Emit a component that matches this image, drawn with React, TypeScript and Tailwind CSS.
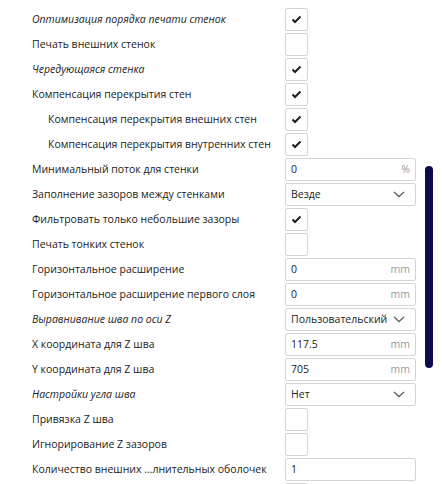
type Row =
  | { label: string; italic?: boolean; indent?: boolean; kind: "check"; checked: boolean }
  | { label: string; italic?: boolean; indent?: boolean; kind: "input"; value: string; unit?: string }
  | { label: string; italic?: boolean; indent?: boolean; kind: "select"; value: string };

const rows: Row[] = [
  { label: "Оптимизация порядка печати стенок", italic: true, kind: "check", checked: true },
  { label: "Печать внешних стенок", kind: "check", checked: false },
  { label: "Чередующаяся стенка", italic: true, kind: "check", checked: true },
  { label: "Компенсация перекрытия стен", kind: "check", checked: true },
  { label: "Компенсация перекрытия внешних стен", indent: true, kind: "check", checked: true },
  { label: "Компенсация перекрытия внутренних стен", indent: true, kind: "check", checked: true },
  { label: "Минимальный поток для стенки", kind: "input", value: "0", unit: "%" },
  { label: "Заполнение зазоров между стенками", kind: "select", value: "Везде" },
  { label: "Фильтровать только небольшие зазоры", kind: "check", checked: true },
  { label: "Печать тонких стенок", kind: "check", checked: false },
  { label: "Горизонтальное расширение", kind: "input", value: "0", unit: "mm" },
  { label: "Горизонтальное расширение первого слоя", kind: "input", value: "0", unit: "mm" },
  { label: "Выравнивание шва по оси Z", italic: true, kind: "select", value: "Пользовательский" },
  { label: "X координата для Z шва", kind: "input", value: "117.5", unit: "mm" },
  { label: "Y координата для Z шва", kind: "input", value: "705", unit: "mm" },
  { label: "Настройки угла шва", italic: true, kind: "select", value: "Нет" },
  { label: "Привязка Z шва", kind: "check", checked: false },
  { label: "Игнорирование Z зазоров", kind: "check", checked: false },
  { label: "Количество внешних ...лнительных оболочек", kind: "input", value: "1" },
  { label: "", kind: "check", checked: false },
];

function Check() {
  return (
    <svg width="11" height="9" viewBox="0 0 11 9" fill="none">
      <path d="M1.5 4.5 L4 7 L9.5 1.5" stroke="#1f1f1f" strokeWidth="2" />
    </svg>
  );
}

function Chevron() {
  return (
    <svg width="12" height="7" viewBox="0 0 12 7" fill="none">
      <path d="M1 1 L6 5.5 L11 1" stroke="#666" strokeWidth="1.4" />
    </svg>
  );
}

function Control({ row }: { row: Row }) {
  if (row.kind === "check") {
    return (
      <div className="flex h-[23px] w-[23px] items-center justify-center rounded-[2px] border border-[#d4d4d4] bg-white">
        {row.checked && <Check />}
      </div>
    );
  }
  if (row.kind === "select") {
    return (
      <div className="flex h-[23px] w-[131px] items-center justify-between rounded-[2px] border border-[#d4d4d4] bg-white pl-[5px] pr-[10px]">
        <span>{row.value}</span>
        <Chevron />
      </div>
    );
  }
  return (
    <div className="flex h-[23px] w-[131px] items-center justify-between rounded-[2px] border border-[#d4d4d4] bg-white pl-[5px] pr-[5px]">
      <span>{row.value}</span>
      {row.unit && <span className="text-[#9a9a9a]">{row.unit}</span>}
    </div>
  );
}

export default function App() {
  return (
    <div
      className="relative h-[484px] w-[442px] overflow-hidden bg-white pt-[8px] text-[10.5px] text-[#222]"
      style={{ fontFamily: '"Open Sans", sans-serif' }}
    >
      <div className="flex flex-col gap-[2px]">
        {rows.map((row, i) => (
          <div key={i} className="flex h-[23px] items-center">
            <div
              className={`w-[285px] shrink-0 whitespace-nowrap ${row.indent ? "pl-[48px]" : "pl-[32px]"} ${row.italic ? "italic" : ""}`}
            >
              {row.label}
            </div>
            <Control row={row} />
          </div>
        ))}
      </div>
      <div className="absolute left-[425px] top-[166px] h-[202px] w-[8px] rounded-full bg-[#0c0b4d]" />
    </div>
  );
}
